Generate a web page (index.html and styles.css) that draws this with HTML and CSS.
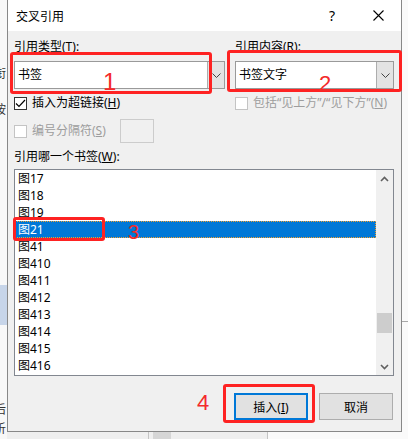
FILE: index.html
```html
<!DOCTYPE html>
<html lang="zh-CN">
<head>
  <meta charset="UTF-8">
  <title>交叉引用</title>
  <link rel="stylesheet" href="styles.css">
</head>
<body>

  <div class="desk-left">
    <span class="peek peek-1">衔</span>
    <span class="peek peek-2">按</span>
    <div class="peek-band"></div>
    <span class="peek peek-3">后</span>
    <span class="peek peek-4">析</span>
  </div>

  <div class="dialog">
    <div class="titlebar">
      <span class="title">交叉引用</span>
      <span class="tb-btn tb-help">?</span>
      <span class="tb-btn">
        <svg width="11" height="11" viewBox="0 0 11 11"><path d="M0.5 0.5 L10.5 10.5 M10.5 0.5 L0.5 10.5" stroke="#000" stroke-width="1.1" fill="none"/></svg>
      </span>
    </div>

    <div class="dialog-body">
      <div class="top-grid">
        <div class="field-label">引用类型(<u>T</u>):</div>
        <div class="field-label">引用内容(<u>R</u>):</div>

        <div class="combo">
          <span class="combo-text">书签</span>
          <span class="combo-btn">
            <svg width="9" height="5" viewBox="0 0 9 5"><path d="M0.5 0.5 L4.5 4.5 L8.5 0.5" stroke="#444" stroke-width="1" fill="none"/></svg>
          </span>
        </div>
        <div class="combo">
          <span class="combo-text">书签文字</span>
          <span class="combo-btn">
            <svg width="9" height="5" viewBox="0 0 9 5"><path d="M0.5 0.5 L4.5 4.5 L8.5 0.5" stroke="#444" stroke-width="1" fill="none"/></svg>
          </span>
        </div>

        <div class="check">
          <span class="box">
            <svg width="11" height="11" viewBox="0 0 11 11"><path d="M1 5.5 L4 8.5 L10 2" stroke="#000" stroke-width="1.2" fill="none"/></svg>
          </span>
          <span class="check-text">插入为超链接(<u>H</u>)</span>
        </div>
        <div class="check disabled">
          <span class="box"></span>
          <span class="check-text">包括“见上方”/“见下方”(<u>N</u>)</span>
        </div>

        <div class="check check-sep disabled">
          <span class="box"></span>
          <span class="check-text">编号分隔符(<u>S</u>)</span>
          <span class="sep-input"></span>
        </div>
      </div>

      <div class="field-label list-label">引用哪一个书签(<u>W</u>):</div>

      <div class="listbox">
        <ul class="items">
          <li>图17</li>
          <li>图18</li>
          <li>图19</li>
          <li class="selected">图21</li>
          <li>图41</li>
          <li>图410</li>
          <li>图411</li>
          <li>图412</li>
          <li>图413</li>
          <li>图414</li>
          <li>图415</li>
          <li>图416</li>
        </ul>
        <div class="scrollbar">
          <span class="sb-arrow">
            <svg width="9" height="6" viewBox="0 0 9 6"><path d="M1 5 L4.5 1.5 L8 5" stroke="#606060" stroke-width="1.6" fill="none"/></svg>
          </span>
          <div class="sb-track"><div class="sb-thumb"></div></div>
          <span class="sb-arrow">
            <svg width="9" height="6" viewBox="0 0 9 6"><path d="M1 1 L4.5 4.5 L8 1" stroke="#606060" stroke-width="1.6" fill="none"/></svg>
          </span>
        </div>
      </div>

      <div class="actions">
        <button class="btn btn-default">插入(<u>I</u>)</button>
        <button class="btn">取消</button>
      </div>
    </div>

    <!-- red annotations drawn over the dialog -->
    <div class="mark mark-1"></div>
    <div class="mark mark-2"></div>
    <div class="mark mark-3"></div>
    <div class="mark mark-4"></div>
    <span class="num num-1">1</span>
    <span class="num num-2">2</span>
    <span class="num num-3">3</span>
    <span class="num num-4">4</span>
  </div>

  <div class="desk-right"><div class="desk-rule"></div></div>

  <div class="desk-bottom">
    <div class="strip strip-light"></div>
    <div class="strip strip-line"></div>
    <div class="strip strip-gap"></div>
    <div class="strip strip-dark"></div>
    <div class="strip strip-mid"></div>
    <div class="strip strip-line"></div>
    <div class="strip strip-white"></div>
  </div>

</body>
</html>
```

FILE: styles.css
```css
* {
  box-sizing: border-box;
}

body {
  margin: 0;
  width: 408px;
  height: 439px;
  overflow: hidden;
  background: #f7f7f7;
  font-family: "Noto Sans", "Noto Sans CJK SC", sans-serif;
  font-size: 12px;
  color: #000;
  display: grid;
  grid-template-columns: 7px 395px 6px;
  grid-template-rows: 432px 7px;
  grid-template-areas:
    "left dialog right"
    "left bottom bottom";
}

/* app window peeking out behind the dialog */
.desk-left {
  grid-area: left;
  overflow: hidden;
  display: flex;
  flex-direction: column;
  padding-top: 66px;
  background: #f8f8f8;
}

.peek {
  display: block;
  height: 14px;
  line-height: 14px;
  margin-left: -6px;
  color: #333;
  font-family: "Noto Sans CJK SC", sans-serif;
}

.peek-2 { margin-top: 22px; }
.peek-3 { margin-top: 77px; }
.peek-4 { margin-top: 5px; }

.peek-band {
  height: 40px;
  margin-top: 169px;
  background: #c7d5e9;
}

.desk-right {
  grid-area: right;
  background: #fafafa;
  padding-top: 321px;
}

.desk-rule {
  height: 1px;
  background: #a8a8a8;
}

.desk-bottom {
  grid-area: bottom;
  display: flex;
}

.strip-light { width: 141px; background: #efefef; }
.strip-line { width: 1px; background: #c4c4c4; }
.strip-gap { width: 4px; background: #efefef; }
.strip-dark { width: 18px; background: #d6d6d6; }
.strip-mid { width: 96px; background: #efefef; }
.strip-white { flex: 1; background: #fafafa; }

/* dialog */
.dialog {
  grid-area: dialog;
  position: relative;
  display: flex;
  flex-direction: column;
  background: #f0f0f0;
  border: 1px solid #888;
  border-top: 0;
}

.titlebar {
  height: 31px;
  background: #fff;
  display: flex;
  align-items: center;
}

.title {
  flex: 1;
  padding-left: 8px;
}

.tb-btn {
  width: 46px;
  height: 31px;
  display: flex;
  align-items: center;
  justify-content: center;
}

.tb-help {
  font-size: 14px;
}

.dialog-body {
  padding: 8px 7px 11px 6px;
}

.field-label {
  height: 16px;
  line-height: 16px;
}

.top-grid {
  display: grid;
  grid-template-columns: 211px 159px;
  grid-template-rows: 22px 34px 24px 24px;
  column-gap: 10px;
  align-items: start;
}

.combo {
  height: 28px;
  display: flex;
  background: #fff;
  border: 1px solid #9a9a9a;
}

.combo-text {
  flex: 1;
  padding-left: 3px;
  line-height: 26px;
}

.combo-btn {
  width: 17px;
  background: #e3e3e3;
  border-left: 1px solid #adadad;
  display: flex;
  align-items: center;
  justify-content: center;
}

.check {
  height: 16px;
  display: flex;
  align-items: center;
  gap: 5px;
  line-height: 16px;
  white-space: nowrap;
}

.check.disabled {
  color: #9d9d9d;
}

.check-sep {
  height: 24px;
}

.box {
  width: 13px;
  height: 13px;
  flex: none;
  background: #fff;
  border: 1px solid #333;
  display: flex;
  align-items: center;
  justify-content: center;
}

.disabled .box {
  border-color: #c4c4c4;
}

.sep-input {
  width: 34px;
  height: 24px;
  margin-left: 9px;
  background: #f0f0f0;
  border: 1px solid #cccccc;
}

.list-label {
  margin-top: 6px;
  margin-bottom: 4px;
}

.listbox {
  height: 207px;
  display: flex;
  background: #fff;
  border: 1px solid #828790;
}

.items {
  flex: 1;
  list-style: none;
  margin: 0;
  padding: 0;
  overflow: hidden;
}

.items li {
  height: 17px;
  line-height: 17px;
  padding-left: 3px;
}

.items li.selected {
  background: #0078d7;
  color: #fff;
  outline: 1px dotted #f0a030;
  outline-offset: -1px;
}

.scrollbar {
  width: 17px;
  display: flex;
  flex-direction: column;
  background: #f0f0f0;
}

.sb-arrow {
  height: 17px;
  display: flex;
  align-items: center;
  justify-content: center;
}

.sb-track {
  flex: 1;
  padding: 126px 1px 0;
}

.sb-thumb {
  height: 20px;
  background: #cdcdcd;
}

.actions {
  margin-top: 17px;
  margin-right: 1px;
  display: flex;
  justify-content: flex-end;
  gap: 11px;
}

.btn {
  width: 74px;
  height: 27px;
  padding: 0;
  font: inherit;
  color: #000;
  background: #e1e1e1;
  border: 1px solid #adadad;
}

.btn-default {
  border: 2px solid #0078d7;
}

/* red annotations */
.mark {
  position: absolute;
  border: 3px solid #fe2222;
  border-radius: 3px;
}

.mark-1 { left: 2px; top: 52px; width: 202px; height: 42px; }
.mark-2 { left: 219px; top: 50px; width: 175px; height: 42px; }
.mark-3 { left: 5px; top: 217px; width: 92px; height: 24px; }
.mark-4 { left: 215px; top: 384px; width: 92px; height: 39px; }

.num {
  position: absolute;
  font-family: "Liberation Sans", sans-serif;
  line-height: 1;
  color: #f42a2a;
}

.num-1 { left: 95px; top: 70px; font-size: 24px; }
.num-2 { left: 311px; top: 73px; font-size: 22px; }
.num-3 { left: 120px; top: 222px; font-size: 20px; }
.num-4 { left: 189px; top: 392px; font-size: 22px; }
```
